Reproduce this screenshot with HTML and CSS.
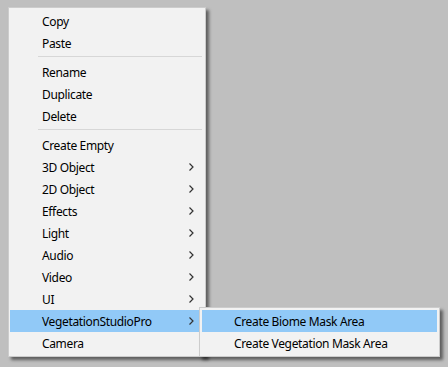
FILE: index.html
```html
<html>
<head>
<title>Hierarchy Context Menu</title>
<link rel="stylesheet" href="styles.css">
</head>
<body>
<ul class="menu">
  <li class="item">Copy</li>
  <li class="item">Paste</li>
  <li class="sep"></li>
  <li class="item">Rename</li>
  <li class="item">Duplicate</li>
  <li class="item">Delete</li>
  <li class="sep"></li>
  <li class="item">Create Empty</li>
  <li class="item sub">3D Object<svg class="arrow" width="5" height="8" viewBox="0 0 5 8"><polyline points="0.5,0.5 4,4 0.5,7.5"/></svg></li>
  <li class="item sub">2D Object<svg class="arrow" width="5" height="8" viewBox="0 0 5 8"><polyline points="0.5,0.5 4,4 0.5,7.5"/></svg></li>
  <li class="item sub">Effects<svg class="arrow" width="5" height="8" viewBox="0 0 5 8"><polyline points="0.5,0.5 4,4 0.5,7.5"/></svg></li>
  <li class="item sub">Light<svg class="arrow" width="5" height="8" viewBox="0 0 5 8"><polyline points="0.5,0.5 4,4 0.5,7.5"/></svg></li>
  <li class="item sub">Audio<svg class="arrow" width="5" height="8" viewBox="0 0 5 8"><polyline points="0.5,0.5 4,4 0.5,7.5"/></svg></li>
  <li class="item sub">Video<svg class="arrow" width="5" height="8" viewBox="0 0 5 8"><polyline points="0.5,0.5 4,4 0.5,7.5"/></svg></li>
  <li class="item sub">UI<svg class="arrow" width="5" height="8" viewBox="0 0 5 8"><polyline points="0.5,0.5 4,4 0.5,7.5"/></svg></li>
  <li class="item sub active">VegetationStudioPro<svg class="arrow" width="5" height="8" viewBox="0 0 5 8"><polyline points="0.5,0.5 4,4 0.5,7.5"/></svg>
    <ul class="menu submenu">
      <li class="item active">Create Biome Mask Area</li>
      <li class="item">Create Vegetation Mask Area</li>
    </ul>
  </li>
  <li class="item">Camera</li>
</ul>
</body>
</html>
```

FILE: styles.css
```css
body {
    margin: 0;
    background: #bfbfbf;
    font-family: "Noto Sans", "Open Sans", sans-serif;
    font-size: 12px;
    letter-spacing: -0.35px;
    color: #000;
}

.menu {
    list-style: none;
    margin: 7px 0 0 8px;
    padding: 2px 1px;
    width: 194px;
    background: #f2f2f2;
    border: 1px solid #cccccc;
    box-shadow: 3px 3px 3px rgba(0, 0, 0, 0.5);
}

.item {
    position: relative;
    display: flex;
    align-items: center;
    justify-content: space-between;
    height: 22px;
    padding: 0 10px 0 32px;
    white-space: nowrap;
}

.item.active {
    background: #91c9f7;
}

.sep {
    height: 0;
    margin: 2px 2px 4px 28px;
    border-top: 1px solid #d7d7d7;
}

.arrow {
    fill: none;
    stroke: #333;
    stroke-width: 1.2;
}

.submenu {
    position: absolute;
    left: 189px;
    top: -3px;
    margin: 0;
    padding: 2px;
    width: 235px;
    z-index: 2;
}
```
